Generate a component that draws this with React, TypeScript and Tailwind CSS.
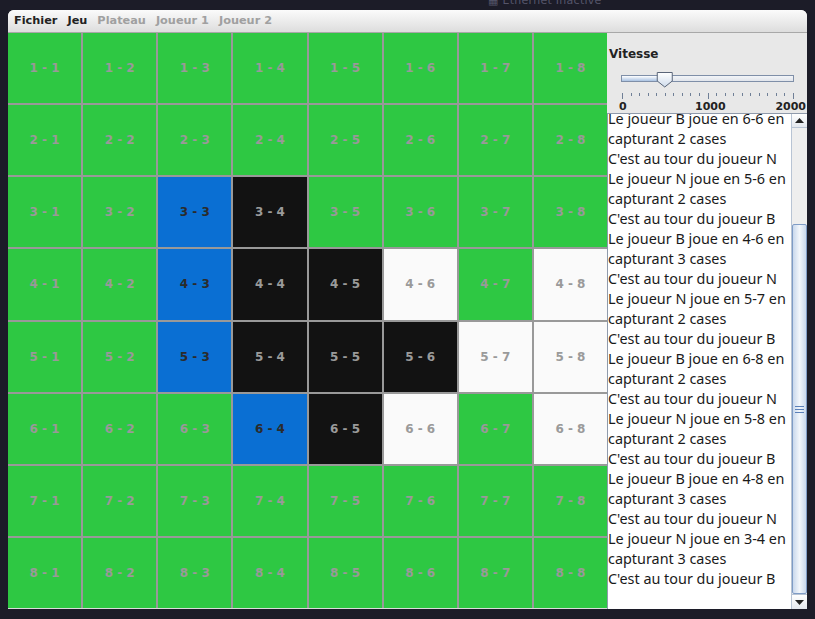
import React from "react";

const rows = [
  "gggggggg",
  "gggggggg",
  "ggbkgggg",
  "ggbkkwgw",
  "ggbkkkww",
  "gggbkwgw",
  "gggggggg",
  "gggggggg",
];

const cellCls: Record<string, string> = {
  g: "bg-[#2ec843] text-[#999999]",
  b: "bg-[#0a6fd3] text-[#2b2b2b]",
  k: "bg-[#121212] text-[#9a9a9a]",
  w: "bg-[#fafafa] text-[#9a9a9a]",
};

const log = [
  "Le joueur B joue en 6-6 en",
  "capturant 2 cases",
  "C'est au tour du joueur N",
  "Le joueur N joue en 5-6 en",
  "capturant 2 cases",
  "C'est au tour du joueur B",
  "Le joueur B joue en 4-6 en",
  "capturant 3 cases",
  "C'est au tour du joueur N",
  "Le joueur N joue en 5-7 en",
  "capturant 2 cases",
  "C'est au tour du joueur B",
  "Le joueur B joue en 6-8 en",
  "capturant 2 cases",
  "C'est au tour du joueur N",
  "Le joueur N joue en 5-8 en",
  "capturant 2 cases",
  "C'est au tour du joueur B",
  "Le joueur B joue en 4-8 en",
  "capturant 3 cases",
  "C'est au tour du joueur N",
  "Le joueur N joue en 3-4 en",
  "capturant 3 cases",
  "C'est au tour du joueur B",
];

function Slider() {
  const x0 = 15;
  const x1 = 186;
  const ticks = Array.from({ length: 21 }, (_, i) => x0 + ((x1 - x0) * i) / 20);
  const tx = x0 + ((x1 - x0) * 500) / 2000;
  return (
    <svg width="200" height="34" viewBox="0 0 200 34">
      <defs>
        <linearGradient id="trk" x1="0" y1="0" x2="0" y2="1">
          <stop offset="0" stopColor="#f4f6f9" />
          <stop offset="1" stopColor="#dfe3ea" />
        </linearGradient>
        <linearGradient id="fill" x1="0" y1="0" x2="0" y2="1">
          <stop offset="0" stopColor="#ffffff" />
          <stop offset="1" stopColor="#a9c2e2" />
        </linearGradient>
        <linearGradient id="thumb" x1="0" y1="0" x2="0" y2="1">
          <stop offset="0" stopColor="#ffffff" />
          <stop offset="1" stopColor="#cfdcec" />
        </linearGradient>
      </defs>
      <rect x={x0 - 0.5} y="4.5" width={x1 - x0 + 1} height="6" fill="url(#trk)" stroke="#7f8fa8" />
      <rect x={x0} y="5" width={tx - x0} height="5" fill="url(#fill)" />
      <path
        d={`M${tx - 7.5} 1.5 H${tx + 7.5} V10 L${tx} 16 L${tx - 7.5} 10 Z`}
        fill="url(#thumb)"
        stroke="#5a6578"
      />
      {ticks.map((t, i) => (
        <line
          key={i}
          x1={Math.round(t) + 0.5}
          x2={Math.round(t) + 0.5}
          y1={22}
          y2={i % 10 === 0 ? 28 : 25}
          stroke="#6f7f96"
        />
      ))}
    </svg>
  );
}

export default function App() {
  return (
    <div className="w-[815px] h-[619px] bg-[#1c1c28] overflow-hidden flex flex-col" style={{ fontFamily: '"DejaVu Sans", sans-serif' }}>
      <div className="h-[10px] shrink-0 relative">
        <div className="absolute left-[488px] top-[-7px] text-[11px] text-[#55556a] tracking-wide">▦ Ethernet Inactive</div>
      </div>
      <div className="ml-[8px] w-[799px] h-[599px] rounded-t-[6px] overflow-hidden bg-[#e8e8e8] flex flex-col">
        <div className="h-[23px] shrink-0 flex items-center gap-[10px] pl-[6px] bg-gradient-to-b from-[#fbfbfb] to-[#dddddd] border-b border-[#a8a8a8] text-[11.3px] font-bold">
          <span className="text-[#222]">Fichier</span>
          <span className="text-[#222]">Jeu</span>
          <span className="text-[#a0a0a0]">Plateau</span>
          <span className="text-[#a0a0a0]">Joueur 1</span>
          <span className="text-[#a0a0a0]">Joueur 2</span>
        </div>
        <div className="flex flex-1 min-h-0">
          <div className="w-[599px] flex flex-col">
            <div className="h-[575px] grid grid-cols-8 grid-rows-8 gap-[2px] bg-[#999999]">
              {rows.map((r, ri) =>
                r.split("").map((c, ci) => (
                  <div
                    key={`${ri}-${ci}`}
                    className={`${cellCls[c]} flex items-center justify-center text-[12px] font-bold`}
                  >
                    {ri + 1} - {ci + 1}
                  </div>
                ))
              )}
            </div>
            <div className="flex-1 bg-[#dcdcdc]" />
          </div>
          <div className="w-[200px] flex flex-col">
            <div className="pl-[2px] pt-[13px] text-[12px] font-bold text-[#222] leading-[16px]">Vitesse</div>
            <div className="mt-[9px] h-[28px]">
              <Slider />
            </div>
            <div className="relative h-[14px] text-[11px] font-bold text-[#222] leading-[13px]">
              <span className="absolute top-[1px] left-[12px]">0</span>
              <span className="absolute top-[1px] left-[88px]">1000</span>
              <span className="absolute top-[1px] right-[1px]">2000</span>
            </div>
            <div className="flex-1 min-h-0 flex border-t border-l border-[#8f9aab] bg-white">
              <div className="flex-1 overflow-hidden" style={{ fontFamily: '"Noto Sans", sans-serif' }}>
                <div className="mt-[-5px] pl-[0px] text-[14.4px] leading-[20px] text-[#1a1a1a] whitespace-nowrap">
                  {log.map((l, i) => (
                    <div key={i}>{l}</div>
                  ))}
                </div>
              </div>
              <div className="w-[16px] flex flex-col bg-[#eeeeee] border-l border-[#b8c4d4]">
                <div className="h-[14px] flex items-center justify-center border-b border-[#b8c4d4] bg-gradient-to-b from-white to-[#e4e8ee]">
                  <svg width="9" height="5" viewBox="0 0 9 5"><path d="M0 5 L4.5 0 L9 5 Z" fill="#222" /></svg>
                </div>
                <div className="h-[96px]" />
                <div className="flex-1 mx-[0px] rounded-[2px] border border-[#7f9cc6] bg-gradient-to-r from-[#c9d8ec] via-[#f2f6fb] to-[#c9d8ec] flex items-center justify-center">
                  <div className="flex flex-col gap-[2px]">
                    <div className="w-[9px] h-[1px] bg-[#5a7fb8]" />
                    <div className="w-[9px] h-[1px] bg-[#5a7fb8]" />
                    <div className="w-[9px] h-[1px] bg-[#5a7fb8]" />
                  </div>
                </div>
                <div className="h-[15px] flex items-center justify-center border-t border-[#b8c4d4] bg-gradient-to-b from-white to-[#e4e8ee]">
                  <svg width="9" height="5" viewBox="0 0 9 5"><path d="M0 0 L4.5 5 L9 0 Z" fill="#222" /></svg>
                </div>
              </div>
            </div>
          </div>
        </div>
      </div>
      <div className="flex-1" />
    </div>
  );
}
